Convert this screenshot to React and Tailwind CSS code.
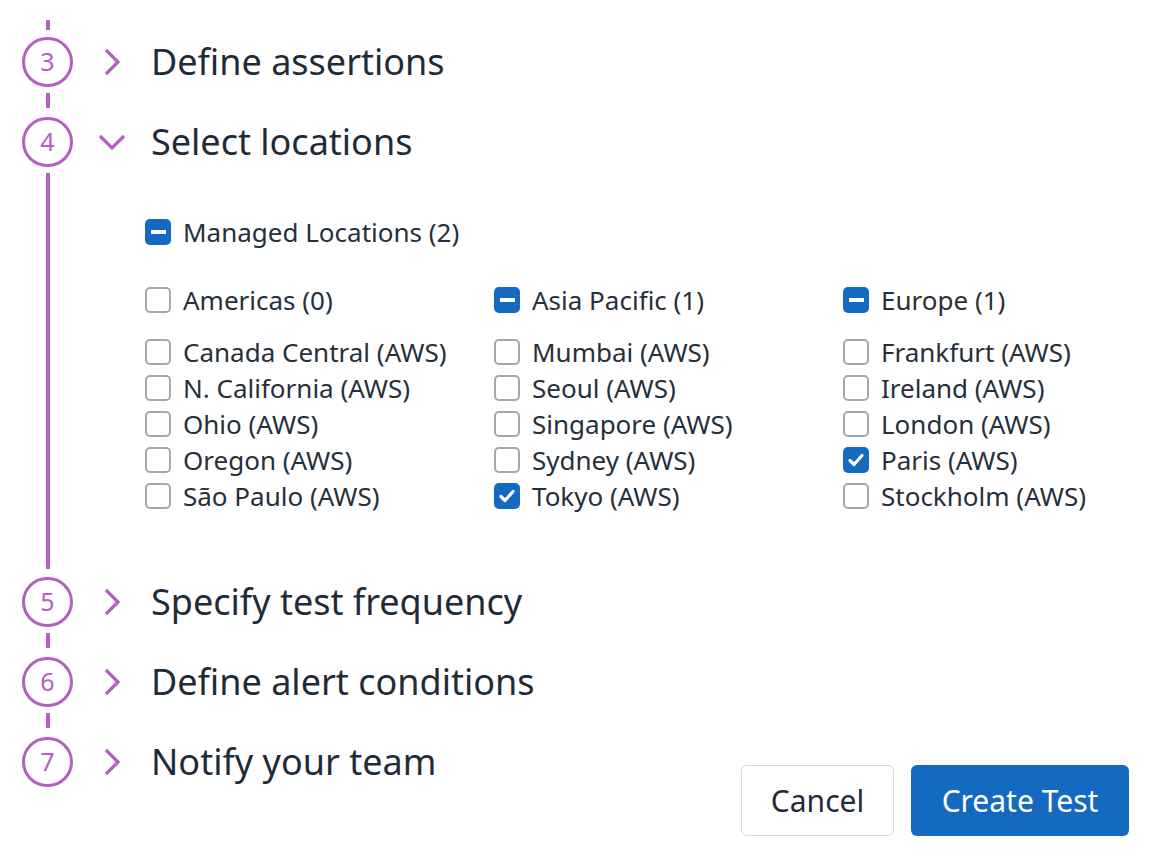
import React from "react";

const PURPLE = "#b262be";

const columns = [
	{
		name: "Americas (0)",
		state: "off",
		items: [
			["Canada Central (AWS)", false],
			["N. California (AWS)", false],
			["Ohio (AWS)", false],
			["Oregon (AWS)", false],
			["São Paulo (AWS)", false],
		],
	},
	{
		name: "Asia Pacific (1)",
		state: "mixed",
		items: [
			["Mumbai (AWS)", false],
			["Seoul (AWS)", false],
			["Singapore (AWS)", false],
			["Sydney (AWS)", false],
			["Tokyo (AWS)", true],
		],
	},
	{
		name: "Europe (1)",
		state: "mixed",
		items: [
			["Frankfurt (AWS)", false],
			["Ireland (AWS)", false],
			["London (AWS)", false],
			["Paris (AWS)", true],
			["Stockholm (AWS)", false],
		],
	},
];

function Box({ state }) {
	if (state === "off") {
		return (
			<span className="w-[26px] h-[26px] shrink-0 rounded-[5px] border-2 border-[#a3a8ae] bg-white" />
		);
	}
	return (
		<span className="w-[26px] h-[26px] shrink-0 rounded-[5px] bg-[#1469c1] flex items-center justify-center">
			{state === "mixed" ? (
				<span className="w-[15px] h-[4px] bg-white" />
			) : (
				<svg width="18" height="18" viewBox="0 0 18 18">
					<path d="M3 9.5 L7 13.5 L15 4.5" fill="none" stroke="white" strokeWidth="3.2" strokeLinecap="round" strokeLinejoin="round" />
				</svg>
			)}
		</span>
	);
}

function Check({ state, label }) {
	return (
		<div className="flex items-center gap-[12px] h-[36px]">
			<Box state={state} />
			<span className="text-[26px] leading-[36px] text-[#25303b] whitespace-nowrap">{label}</span>
		</div>
	);
}

function Chevron({ open }) {
	return (
		<svg width="28" height="28" viewBox="0 0 28 28" className="shrink-0">
			<path
				d={open ? "M2 8 L14 20 L26 8" : "M8 2 L20 14 L8 26"}
				fill="none"
				stroke={PURPLE}
				strokeWidth="3.2"
			/>
		</svg>
	);
}

function Step({ n, title, open }) {
	return (
		<div className="flex items-center h-[50px]">
			<div className="w-[95px] flex justify-center shrink-0">
				<div className="w-[51px] h-[50px] rounded-full border-[3px] border-[#b262be] flex items-center justify-center text-[25px] text-[#b262be]">
					{n}
				</div>
			</div>
			<div className="ml-[3px]">
				<Chevron open={open} />
			</div>
			<span className="ml-[25px] text-[36px] text-[#1f2c38] whitespace-nowrap">{title}</span>
		</div>
	);
}

function Dash({ h = 30, top = 6, len = 15 }) {
	return (
		<div className="w-[95px] flex justify-center" style={{ height: h }}>
			<div className="w-[4px] bg-[#b262be]" style={{ marginTop: top, height: len }} />
		</div>
	);
}

export default function App() {
	return (
		<div className="w-[1151px] h-[857px] bg-white overflow-hidden" style={{ fontFamily: '"Noto Sans", "Open Sans", sans-serif' }}>
			<Dash h={37} top={20} len={10} />
			<Step n="3" title="Define assertions" />
			<Dash />
			<Step n="4" title="Select locations" open />
			<div className="flex h-[410px]">
				<div className="w-[95px] flex justify-center shrink-0 pt-[6px] pb-[8px]">
					<div className="w-[4px] h-full bg-[#b262be]" />
				</div>
				<div className="pl-[50px] pt-[47px]">
					<Check state="mixed" label="Managed Locations (2)" />
					<div className="grid grid-cols-[349px_349px_300px] mt-[32px]">
						{columns.map((c) => (
							<div key={c.name}>
								<Check state={c.state} label={c.name} />
								<div className="mt-[16px]">
									{c.items.map(([label, on]) => (
										<Check key={label} state={on ? "on" : "off"} label={label} />
									))}
								</div>
							</div>
						))}
					</div>
				</div>
			</div>
			<Step n="5" title="Specify test frequency" />
			<Dash />
			<Step n="6" title="Define alert conditions" />
			<Dash />
			<div className="flex items-start">
				<Step n="7" title="Notify your team" />
				<div className="ml-auto flex gap-[17px] pt-[28px] pr-[22px]">
					<button className="w-[153px] h-[71px] rounded-[6px] border-[1.5px] border-[#d5d8dc] bg-white text-[30px] text-[#1f2c38]">
						Cancel
					</button>
					<button className="w-[218px] h-[71px] rounded-[6px] bg-[#1469c1] text-[30px] text-white">
						Create Test
					</button>
				</div>
			</div>
		</div>
	);
}
